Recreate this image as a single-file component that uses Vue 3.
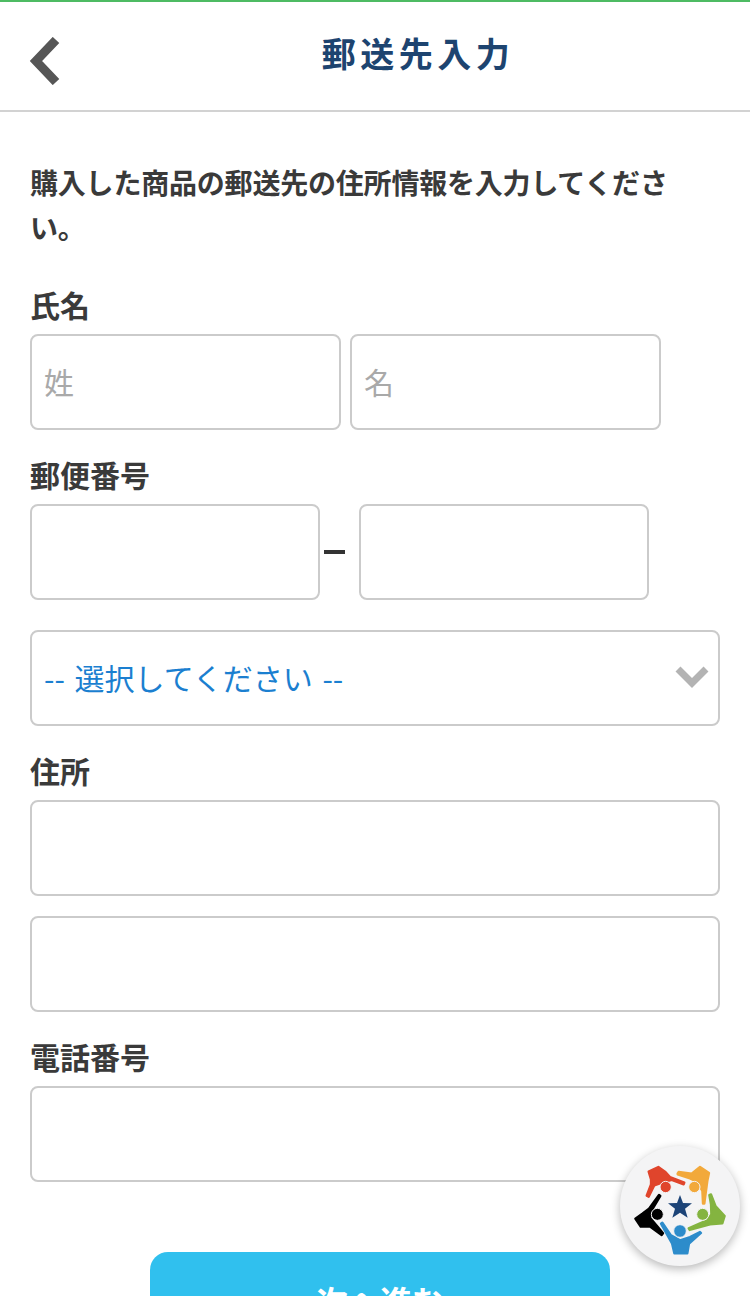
<script setup>
const selectLabel = '-- 選択してください --'
</script>

<template>
  <div class="page">
    <header class="header">
      <div class="back">
        <svg width="34" height="48" viewBox="0 0 34 48"><path d="M29 3 L9 24 L29 45" fill="none" stroke="#565656" stroke-width="9" /></svg>
      </div>
      <h1 class="title">郵送先入力</h1>
    </header>
    <main class="content">
      <p class="lead">購入した商品の郵送先の住所情報を入力してください。</p>

      <label class="label first">氏名</label>
      <div class="row name">
        <input class="field" placeholder="姓" />
        <input class="field" placeholder="名" />
      </div>

      <label class="label">郵便番号</label>
      <div class="row zip">
        <input class="field" />
        <span class="dash"></span>
        <input class="field" />
      </div>

      <div class="select">
        <span>{{ selectLabel }}</span>
        <svg class="chev" width="34" height="24" viewBox="0 0 34 24"><path d="M3 4 L17 18 L31 4" fill="none" stroke="#b3b3b3" stroke-width="7" /></svg>
      </div>

      <label class="label addr">住所</label>
      <input class="field wide" />
      <input class="field wide second" />

      <label class="label">電話番号</label>
      <input class="field wide" />

      <button class="next">次へ進む</button>
    </main>

    <div class="fab">
      <svg width="120" height="120" viewBox="60 45 360 360">
        <g stroke-width="7" stroke-linejoin="round">
          <path fill="#e0452c" stroke="#e0452c" d="M146 122 L175 108 L195 122 L210 138 L253 155 L251 160 L215 147 L180 157 L163 163 L146 197 L140 194 L153 160 L153 145 Z" />
          <path fill="#f2a93b" stroke="#f2a93b" d="M233 127 L236 123 L275 128 L300 108 L327 126 L322 150 L313 218 L309 218 L307 180 L292 153 L270 142 L233 130 Z" />
          <path fill="#84b440" stroke="#84b440" d="M328 192 L333 190 L347 226 L374 255 L367 277 L330 280 L269 297 L266 292 L300 277 L323 267 L334 250 L333 220 Z" />
          <path fill="#2d8ccb" stroke="#2d8ccb" d="M183 278 L187 275 L213 313 L240 328 L270 318 L300 303 L303 306 L267 338 L262 367 L223 367 L216 337 Z" />
          <path fill="#000" stroke="#000" d="M177 192 L181 195 L160 230 L150 260 L173 287 L189 307 L185 312 L150 287 L122 287 L106 263 L127 248 L147 233 Z" />
        </g>
        <circle cx="197" cy="168" r="17" fill="#e0452c" stroke="#f4f4f5" stroke-width="3" />
        <circle cx="283" cy="168" r="17" fill="#f2a93b" stroke="#f4f4f5" stroke-width="3" />
        <circle cx="308" cy="250" r="18" fill="#84b440" stroke="#f4f4f5" stroke-width="3" />
        <circle cx="240" cy="300" r="19" fill="#2d8ccb" stroke="#f4f4f5" stroke-width="3" />
        <circle cx="172" cy="250" r="18" fill="#000" stroke="#f4f4f5" stroke-width="3" />
        <polygon fill="#1d4477" points="240,192 249,216 276,217 255,233 263,260 240,245 217,260 225,233 204,217 231,216" />
      </svg>
    </div>
  </div>
</template>

<style>
html, body { margin: 0; background: #fff; overflow: hidden; }
</style>

<style scoped>
.page {
  position: relative;
  width: 750px;
  height: 1296px;
  overflow: hidden;
  background: #fff;
  border-top: 2px solid #4dbb63;
  box-sizing: border-box;
  font-family: "Noto Sans CJK JP", "Liberation Sans", sans-serif;
  color: #3a3a3a;
}
.header {
  display: flex;
  align-items: center;
  height: 110px;
  box-sizing: border-box;
  border-bottom: 2px solid #d2d2d2;
}
.back {
  width: 84px;
  box-sizing: border-box;
  padding-left: 27px;
  padding-top: 10px;
  display: flex;
}
.title {
  flex: 1;
  margin: 0 0 6px;
  padding-left: 2px;
  text-align: center;
  font-size: 34px;
  font-weight: 700;
  letter-spacing: 4.5px;
  color: #1d4470;
  line-height: 46px;
}
.content {
  padding: 48px 30px 0;
  display: flex;
  flex-direction: column;
  align-items: flex-start;
}
.lead {
  margin: 0;
  font-size: 28px;
  font-weight: 700;
  letter-spacing: -0.2px;
  line-height: 45px;
  width: 690px;
}
.label {
  display: block;
  font-size: 30px;
  font-weight: 700;
  line-height: 40px;
  margin-top: 24px;
  margin-bottom: 10px;
}
.label.first { margin-top: 34px; }
.label.addr { margin-top: 26px; margin-bottom: 10px; }
.row { display: flex; align-items: center; }
.name { gap: 9px; }
.name .field { width: 311px; }
.zip .field { width: 290px; }
.dash {
  width: 39px;
  display: flex;
  justify-content: center;
}
.dash::before {
  content: "";
  width: 21px;
  height: 4px;
  margin-left: -11px;
  background: #333;
}
.field {
  display: block;
  box-sizing: border-box;
  height: 96px;
  padding: 0 12px 3px;
  border: 2px solid #cbcbcb;
  border-radius: 8px;
  background: #fff;
  font: inherit;
  font-size: 30px;
  outline: none;
}
.field::placeholder { color: #a9a9a9; opacity: 1; }
.wide { width: 690px; }
.second { margin-top: 20px; }
.select {
  position: relative;
  display: flex;
  align-items: center;
  box-sizing: border-box;
  width: 690px;
  height: 96px;
  margin-top: 30px;
  margin-bottom: -2px;
  padding: 0 12px 2px;
  border: 2px solid #cbcbcb;
  border-radius: 8px;
  font-size: 30px;
  word-spacing: 3px;
  color: #1b7fd0;
}
.chev {
  position: absolute;
  right: 9px;
  top: 33px;
}
.next {
  display: block;
  align-self: center;
  width: 460px;
  height: 96px;
  margin-top: 70px;
  margin-left: 10px;
  flex-shrink: 0;
  border: 0;
  border-radius: 18px;
  background: #30c0ee;
  color: #fff;
  font: inherit;
  font-size: 32px;
  font-weight: 700;
}
.fab {
  position: absolute;
  left: 620px;
  top: 1144px;
  width: 120px;
  height: 120px;
  border-radius: 50%;
  background: #f4f4f5;
  box-shadow: 0 3px 10px rgba(0, 0, 0, 0.28);
}
</style>
